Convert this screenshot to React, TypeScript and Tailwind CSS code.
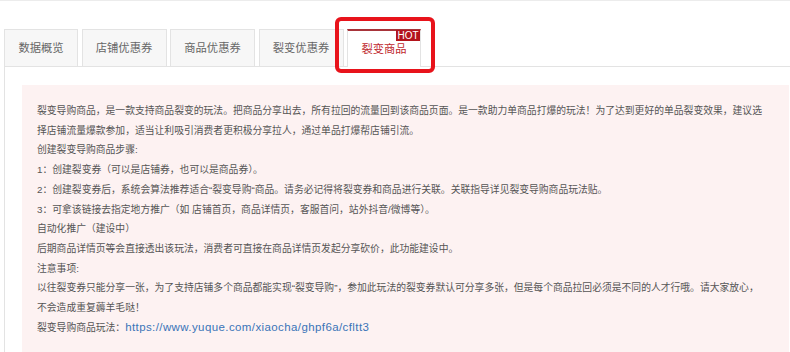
import React from "react";

const tabs = [
  { label: "数据概览", w: "w-[74px]" },
  { label: "店铺优惠券", w: "w-[85px]" },
  { label: "商品优惠券", w: "w-[85px]" },
  { label: "裂变优惠券", w: "w-[85px]" },
];

const lines: string[] = [
  "裂变导购商品，是一款支持商品裂变的玩法。把商品分享出去，所有拉回的流量回到该商品页面。是一款助力单商品打爆的玩法！为了达到更好的单品裂变效果，建议选",
  "择店铺流量爆款参加，适当让利吸引消费者更积极分享拉人，通过单品打爆帮店铺引流。",
  "创建裂变导购商品步骤:",
  "1：创建裂变券（可以是店铺券，也可以是商品券）。",
  "2：创建裂变券后，系统会算法推荐适合“裂变导购“商品。请务必记得将裂变券和商品进行关联。关联指导详见裂变导购商品玩法贴。",
  "3：可拿该链接去指定地方推广（如 店铺首页，商品详情页，客服首问，站外抖音/微博等）。",
  "自动化推广（建设中）",
  "后期商品详情页等会直接透出该玩法，消费者可直接在商品详情页发起分享砍价，此功能建设中。",
  "注意事项:",
  "以往裂变券只能分享一张，为了支持店铺多个商品都能实现“裂变导购”，参加此玩法的裂变券默认可分享多张，但是每个商品拉回必须是不同的人才行哦。请大家放心，",
  "不会造成重复薅羊毛哒！",
];

export default function App() {
  return (
    <div
      className="relative w-[790px] h-[352px] overflow-hidden bg-white border-t border-[#ececec]"
      style={{ fontFamily: '"Liberation Sans", "Noto Sans CJK SC", sans-serif' }}
    >
      {/* Tabs */}
      <div className="flex items-end gap-[3.5px] pl-[4px] pt-[28px]">
        {tabs.map((t) => (
          <div
            key={t.label}
            className={`${t.w} h-[37px] flex items-center justify-center bg-[#f7f7f7] border border-[#e3e3e3] border-b-0 text-[11.3px] text-[#666]`}
          >
            {t.label}
          </div>
        ))}
        <div className="relative w-[74px] h-[38px] -mb-[1px] flex items-center justify-center bg-white border border-[#e3e3e3] border-b-0 border-t-[2px] border-t-[#a8343a] text-[11.3px] text-[#c0282e]">
          裂变商品
          <span className="absolute right-[0px] top-[-1px] h-[11px] w-[24px] flex items-center justify-center bg-[#b3141c] text-white text-[10px] leading-[11px]">
            HOT
          </span>
        </div>
      </div>

      {/* Content panel */}
      <div className="ml-[4px] border-l border-t border-[#e3e3e3] h-[300px] pl-[17px] pt-[18px]">
        <div className="bg-[#fdf2f2] h-[300px] w-[767px] pl-[15px] pt-[16px] text-[9.8px] leading-[19.7px] text-[#555]">
          {lines.map((l, i) => (
            <div key={i} className="whitespace-nowrap">
              {l}
            </div>
          ))}
          <div className="whitespace-nowrap">
            裂变导购商品玩法：
            <span className="text-[#3a74b8] text-[11.5px] tracking-[0.4px]">
              https://www.yuque.com/xiaocha/ghpf6a/cfltt3
            </span>
          </div>
        </div>
      </div>

      {/* Red highlight annotation */}
      <div className="absolute left-[335px] top-[16px] w-[100px] h-[56px] border-[4px] border-[#e8131b] rounded-[6px] pointer-events-none" />
    </div>
  );
}
